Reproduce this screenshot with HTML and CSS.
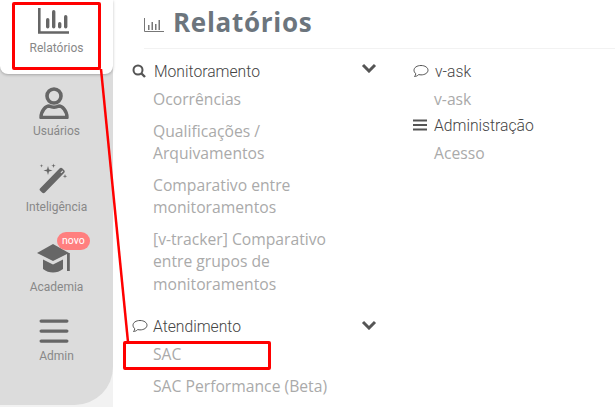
FILE: index.html
```html
<!DOCTYPE html>
<html lang="pt-BR">

<head>
  <meta charset="UTF-8" />
  <title>Relatórios</title>
  <link rel="stylesheet" href="styles.css">
</head>

<body>
  <div class="page">
    <nav class="sidebar">
      <a class="nav-item active">
        <svg class="nav-icon" width="32" height="27" viewBox="0 0 32 27">
          <path d="M1.300 0v24.500H31" fill="none" stroke="#666" stroke-width="2.600" />
          <rect x="8" y="10" width="3.400" height="10.500" rx="1.700" fill="#666" />
          <rect x="14" y="2" width="3.400" height="18.500" rx="1.700" fill="#666" />
          <rect x="20" y="14" width="3.400" height="6.500" rx="1.700" fill="#666" />
          <rect x="26" y="7" width="3.400" height="13.500" rx="1.700" fill="#666" />
        </svg>
        <span>Relatórios</span>
      </a>
      <a class="nav-item users">
        <svg class="nav-icon" width="30" height="32" viewBox="0 0 30 32">
          <circle cx="15" cy="9" r="7" fill="none" stroke="#666" stroke-width="3.600" />
          <path d="M2 30.500c0-7 5-11.500 8-11.500 3 1.500 7 1.500 10 0 3 0 8 4.500 8 11.500z" fill="none" stroke="#666" stroke-width="3.400" stroke-linejoin="round" />
        </svg>
        <span>Usuários</span>
      </a>
      <a class="nav-item magic">
        <svg class="nav-icon" width="30" height="32" viewBox="0 0 30 32">
          <path d="M1 26.500 20.500 6.500c1-1 2-1 3 0l1.500 1.500c1 1 1 2 0 3L6 30.500c-1 1-2 1-3 0l-2-2c-.6-.5-.6-1 0-2z" fill="#666" />
          <path d="M21.500 10.500 23.500 8.500l.8.8-2 2z" fill="#ddd" />
          <path d="M9 4l1 3.500 3.500 1-3.500 1-1 3.500-1-3.500-3.500-1 3.500-1zM14.500 1.500l.5 1.700 1.700.5-1.700.5-.5 1.700-.5-1.700-1.700-.5 1.700-.5zM2.500 2l.4 1.400 1.400.4-1.400.4-.4 1.400-.4-1.400L.7 3.800l1.400-.4zM26 12l.5 1.700 1.700.5-1.700.5-.5 1.700-.5-1.700-1.700-.5 1.700-.5z" fill="#666" />
        </svg>
        <span>Inteligência</span>
      </a>
      <a class="nav-item academy">
        <span class="badge">novo</span>
        <svg class="nav-icon" width="34" height="31" viewBox="0 0 34 31">
          <path d="M0 11 16 2l16 9-16 8z" fill="#666" />
          <path d="M6 17.500 16 22.500l10-5V27c-3 2.500-6.500 3.500-10 3.500S9 29.500 6 27z" fill="#666" />
          <rect x="30" y="11" width="2.800" height="18" fill="#666" />
        </svg>
        <span>Academia</span>
      </a>
      <a class="nav-item admin">
        <svg class="nav-icon" width="30" height="24" viewBox="0 0 30 24">
          <rect x="0.500" y="0.500" width="29" height="3.200" rx="1.600" fill="#666" />
          <rect x="0.500" y="10.500" width="29" height="3.200" rx="1.600" fill="#666" />
          <rect x="0.500" y="20.500" width="29" height="3.200" rx="1.600" fill="#666" />
        </svg>
        <span>Admin</span>
      </a>
    </nav>

    <main class="content">
      <header class="page-title">
        <svg width="20" height="14" viewBox="0 0 20 14">
          <path d="M.5 0v13.500H20" fill="none" stroke="#777" />
          <path d="M4 7h1.500v5H4zM7.500 4H9v8H7.500zM11 6h1.500v6H11zM14.500 2H16v10h-1.500z" fill="#777" />
        </svg>
        <h1>Relatórios</h1>
      </header>

      <div class="columns">
        <section class="col-left">
          <div class="group-head">
            <svg class="head-icon search" width="14" height="14" viewBox="0 0 14 14">
              <circle cx="6" cy="6" r="4.500" fill="none" stroke="#555" stroke-width="2" />
              <path d="M9.500 9.500 13 13" stroke="#555" stroke-width="2.400" />
            </svg>
            <span class="group-name">Monitoramento</span>
            <svg class="chevron" width="16" height="10" viewBox="0 0 16 10">
              <path d="M2 2l6 6 6-6" fill="none" stroke="#555" stroke-width="3" />
            </svg>
          </div>
          <ul class="links">
            <li>Ocorrências</li>
            <li>Qualificações / Arquivamentos</li>
            <li>Comparativo entre monitoramentos</li>
            <li>[v-tracker] Comparativo entre grupos de monitoramentos</li>
          </ul>

          <div class="group-head second">
            <svg class="head-icon" width="16" height="14" viewBox="0 0 16 14">
              <path d="M8 1.500c3.900 0 7 2 7 4.700s-3.100 4.700-7 4.700c-.8 0-1.600-.1-2.300-.3C4.500 11.800 3 12.500 1.500 12.500c.7-.8 1.200-1.700 1.300-2.800C1.700 8.800 1 7.600 1 6.200 1 3.500 4.100 1.500 8 1.500z" fill="none" stroke="#555" />
            </svg>
            <span class="group-name">Atendimento</span>
            <svg class="chevron" width="16" height="10" viewBox="0 0 16 10">
              <path d="M2 2l6 6 6-6" fill="none" stroke="#555" stroke-width="3" />
            </svg>
          </div>
          <ul class="links">
            <li>SAC</li>
            <li class="perf">SAC Performance (Beta)</li>
          </ul>
        </section>

        <section class="col-right">
          <div class="group-head">
            <svg class="head-icon chat" width="16" height="14" viewBox="0 0 16 14">
              <path d="M8 1.500c3.900 0 7 2 7 4.700s-3.100 4.700-7 4.700c-.8 0-1.600-.1-2.300-.3C4.500 11.800 3 12.500 1.500 12.500c.7-.8 1.200-1.700 1.300-2.800C1.700 8.800 1 7.600 1 6.200 1 3.500 4.100 1.500 8 1.500z" fill="none" stroke="#555" />
            </svg>
            <span class="group-name">v-ask</span>
          </div>
          <ul class="links">
            <li>v-ask</li>
          </ul>
          <div class="group-head">
            <svg class="head-icon lines" width="14" height="12" viewBox="0 0 14 12">
              <path d="M0 1.500h14M0 6h14M0 10.500h14" stroke="#555" stroke-width="2" />
            </svg>
            <span class="group-name">Administração</span>
          </div>
          <ul class="links">
            <li>Acesso</li>
          </ul>
        </section>
      </div>
    </main>

    <!-- marcacoes vermelhas do print -->
    <div class="mark mark-nav"></div>
    <div class="mark mark-sac"></div>
    <svg class="mark-line" width="615" height="407" viewBox="0 0 615 407">
      <path d="M101 69 128 342" stroke="#f00" stroke-width="2.500" />
    </svg>
  </div>
</body>

</html>
```

FILE: styles.css
```css
html,
body {
  margin: 0;
  padding: 0;
  background: #fff;
}

.page {
  position: relative;
  display: flex;
  width: 615px;
  height: 407px;
  overflow: hidden;
  background: #fff;
}

.sidebar {
  width: 113px;
  height: 407px;
  flex-shrink: 0;
  background: #f2f2f2;
  display: flex;
  flex-direction: column;
  position: relative;
}

.sidebar::before {
  content: "";
  position: absolute;
  top: 0;
  left: 0;
  width: 113px;
  height: 405px;
  background: #dcdcdc;
  border-bottom-right-radius: 38px;
}

.nav-item {
  position: relative;
  display: flex;
  flex-direction: column;
  align-items: center;
  font-family: Roboto, "Liberation Sans", sans-serif;
  font-size: 12px;
  line-height: 14px;
  color: #888;
}

.nav-icon {
  margin-right: 5px;
}

.nav-item.active {
  height: 74px;
  padding-top: 8px;
  box-sizing: border-box;
  background: #fff;
  border-radius: 0 0 8px 8px;
  box-shadow: 0 1px 3px rgba(0, 0, 0, 0.25);
}

.nav-item.active span {
  margin-top: 6px;
}

.users {
  margin-top: 13px;
}

.users span {
  margin-top: 5px;
}

.magic {
  margin-top: 24px;
}

.magic span {
  margin-top: 6px;
}

.academy {
  margin-top: 28px;
}

.academy .nav-icon {
  margin-right: 6px;
}

.academy span:last-child {
  margin-top: 7px;
}

.admin {
  margin-top: 25px;
}

.admin span {
  margin-top: 6px;
}

.badge {
  position: absolute;
  top: -10px;
  left: 57px;
  padding: 0 5px;
  height: 18px;
  line-height: 17px;
  border-radius: 9px;
  background: #ff7f7f;
  color: #fff;
  font-size: 10.500px;
}

.content {
  flex: 1;
  padding: 0 0 0 18px;
}

.page-title {
  display: flex;
  align-items: center;
  gap: 9px;
  margin: 0 0 0 13px;
  height: 49px;
  padding-bottom: 5px;
  border-bottom: 1px solid #f2f2f2;
  box-sizing: border-box;
}

.page-title svg {
  margin-top: 7px;
}

.page-title h1 {
  margin: 0;
  font-family: "Open Sans", sans-serif;
  font-size: 26px;
  font-weight: 700;
  letter-spacing: 0.7px;
  color: #6c757d;
}

.columns {
  display: flex;
  margin-top: 10px;
}

.col-left {
  width: 250px;
  margin-left: 1px;
}

.col-right {
  margin-left: 31px;
}

.group-head {
  display: flex;
  align-items: center;
  height: 24px;
  font-family: Roboto, "Liberation Sans", sans-serif;
  font-size: 15.700px;
  font-weight: 300;
  color: #444;
}

.group-head.second {
  margin-top: 17px;
}

.head-icon {
  margin-right: 5px;
  flex-shrink: 0;
}

.head-icon.search {
  margin-right: 8px;
}

.head-icon.chat {
  margin-right: 6px;
}

.head-icon.lines {
  margin-right: 7px;
}

.group-name {
  flex: 1;
}

.chevron {
  margin-right: 5px;
  margin-top: -6px;
}

.second .chevron {
  margin-top: -2px;
}

.links {
  list-style: none;
  margin: 3px 0 0;
  padding: 0 0 0 21px;
  font-family: "Open Sans", sans-serif;
  font-size: 15.700px;
  line-height: 22.500px;
  color: #aaa;
}

.links li {
  padding: 2px 40px 2px 0;
}

.col-right .links li {
  padding: 2px 0 2.500px;
}

.links li + li {
  margin-top: 5px;
}

.links .perf {
  padding-right: 0;
}

.mark {
  position: absolute;
  border: 3px solid #f00;
  border-radius: 2px;
  box-sizing: border-box;
}

.mark-nav {
  left: 12px;
  top: 2px;
  width: 89px;
  height: 68px;
}

.mark-sac {
  left: 123px;
  top: 341px;
  width: 148px;
  height: 29px;
}

.mark-line {
  position: absolute;
  top: 0;
  left: 0;
  pointer-events: none;
}
```
